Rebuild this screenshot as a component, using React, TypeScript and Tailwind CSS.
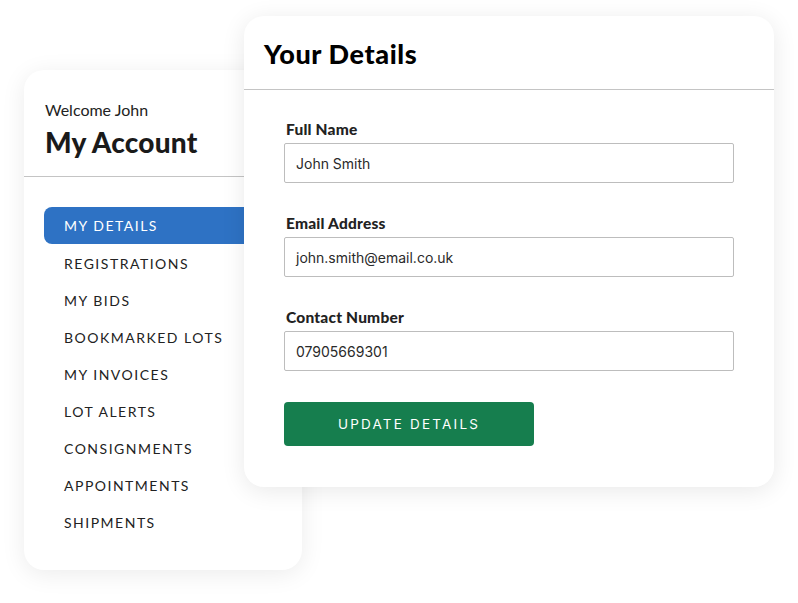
const navItems = [
  "MY DETAILS",
  "REGISTRATIONS",
  "MY BIDS",
  "BOOKMARKED LOTS",
  "MY INVOICES",
  "LOT ALERTS",
  "CONSIGNMENTS",
  "APPOINTMENTS",
  "SHIPMENTS",
];

const fields = [
  { label: "Full Name", value: "John Smith" },
  { label: "Email Address", value: "john.smith@email.co.uk" },
  { label: "Contact Number", value: "07905669301" },
];

const AccountMenu = () => {
  return (
    <div className="mt-[70px] ml-[24px] w-[278px] h-[500px] shrink-0 bg-white rounded-[20px] shadow-[0_4px_24px_rgba(0,0,0,0.08)]">
      <div className="pl-[21px] pt-[29px] pb-[17px] border-b border-[#c4c4c4]">
        <div className="text-[16px] leading-[22px] text-[#222]">Welcome John</div>
        <div className="mt-[4px] text-[28px] leading-[34px] font-black tracking-[0.2px] text-[#1a1a1a]">
          My Account
        </div>
      </div>
      <ul className="pt-[30px] pl-[20px]">
        {navItems.map((item, i) => (
          <li
            key={item}
            className={`h-[37px] flex items-center pl-[20px] text-[14px] tracking-[1.5px] rounded-l-[8px] ${
              i === 0 ? "bg-[#2e72c4] text-white h-[36px] mb-[1px]" : "text-[#222]"
            }`}
          >
            {item}
          </li>
        ))}
      </ul>
    </div>
  );
};

const DetailsForm = () => {
  return (
    <div className="relative z-10 mt-[16px] ml-[-58px] w-[530px] h-[471px] shrink-0 bg-white rounded-[20px] shadow-[0_4px_24px_rgba(0,0,0,0.09)]">
      <div className="h-[74px] pl-[20px] pt-[21px] border-b border-[#c4c4c4]">
        <h1 className="text-[27px] leading-[34px] font-black tracking-[0.6px] text-black">Your Details</h1>
      </div>
      <div className="pl-[40px] pt-[29px]">
        {fields.map((f) => (
          <div key={f.label} className="mb-[30px]">
            <div className="pl-[2px] text-[15.5px] leading-[20px] font-black tracking-[0.2px] text-[#222]">
              {f.label}
            </div>
            <div className="mt-[4px] w-[450px] h-[40px] border border-[#bdbdbd] rounded-[2px] flex items-center pl-[11px] font-['Inter'] text-[14px] text-[#2a2a2a]">
              {f.value}
            </div>
          </div>
        ))}
        <button className="mt-[1px] w-[250px] h-[44px] bg-[#167e4e] rounded-[4px] text-white font-['Inter'] text-[13.5px] tracking-[2.2px]">
          UPDATE DETAILS
        </button>
      </div>
    </div>
  );
};

export default function App() {
  return (
    <div className="w-[798px] h-[603px] bg-white flex items-start font-['Lato',sans-serif]">
      <AccountMenu />
      <DetailsForm />
    </div>
  );
}
